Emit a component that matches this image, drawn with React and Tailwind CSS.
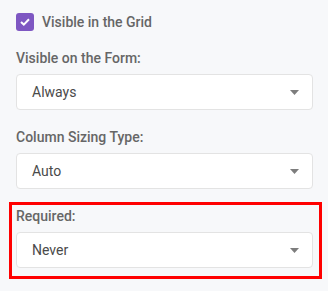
import React from 'react';

function Select({ value }) {
  return (
    <div className="relative flex items-center h-[36px] bg-white border border-[#e3e3e3] rounded-[4px] pl-[15px] pr-3">
      <span className="text-[14px] text-[#4a4a4a]">{value}</span>
      <svg className="absolute right-[13px] top-[15px]" width="9" height="5" viewBox="0 0 9 5">
        <path d="M0 0 H9 L4.5 5 Z" fill="#7d7d7d" />
      </svg>
    </div>
  );
}

function Field({ label, value }) {
  return (
    <div className="flex flex-col">
      <label className="text-[14px] leading-[20px] font-medium text-[#666666] mb-[6px]">{label}</label>
      <Select value={value} />
    </div>
  );
}

export default function App() {
  return (
    <div className="relative w-[328px] h-[291px] bg-[#f7f8fa] overflow-hidden" style={{ fontFamily: 'Roboto, "Liberation Sans", sans-serif' }}>
      <div className="flex flex-col gap-[17px] pl-4 pr-[15px] pt-[13px]">
        {/* checkbox row */}
        <div className="flex items-center gap-2 h-[18px]">
          <div className="w-[18px] h-[18px] rounded-[3px] bg-[#7e57c2] flex items-center justify-center">
            <svg width="10" height="8" viewBox="0 0 10 8">
              <path d="M1 4 L3.8 6.6 L9 1.2" stroke="white" strokeWidth="2" fill="none" />
            </svg>
          </div>
          <span className="text-[14px] font-medium text-[#666666]">Visible in the Grid</span>
        </div>

        <Field label="Visible on the Form:" value="Always" />
        <Field label="Column Sizing Type:" value="Auto" />
        <Field label="Required:" value="Never" />
      </div>

      {/* highlight annotation */}
      <div className="absolute left-[9px] top-[202px] w-[313px] h-[77px] border-[3px] border-[#ff0000] pointer-events-none" />
    </div>
  );
}
